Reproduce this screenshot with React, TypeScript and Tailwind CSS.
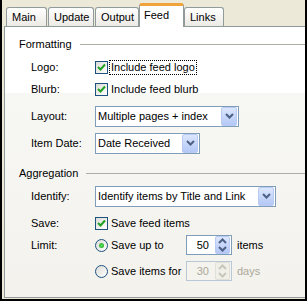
import React from "react";

const Check = () => (
  <span className="w-[13px] h-[13px] border border-[#1c5180] bg-[linear-gradient(135deg,#dcdcd7,#ffffff)] flex items-center justify-center shrink-0">
    <svg width="11" height="11" viewBox="0 0 11 11">
      <polyline points="2,5 4.5,7.5 9,2.5" fill="none" stroke="#21a121" strokeWidth="2" />
    </svg>
  </span>
);

const Radio = ({ on }: { on?: boolean }) => (
  <span className="w-[13px] h-[13px] rounded-full border border-[#1c5180] bg-[linear-gradient(135deg,#dcdcd7,#ffffff)] flex items-center justify-center shrink-0">
    {on && <span className="w-[5px] h-[5px] rounded-full bg-[radial-gradient(circle,#5ee35e,#1e9f1e)]" />}
  </span>
);

const Chevron = ({ color = "#4d6185" }: { color?: string }) => (
  <svg width="9" height="6" viewBox="0 0 9 6">
    <polyline points="1,1 4.5,4.5 8,1" fill="none" stroke={color} strokeWidth="2" />
  </svg>
);

const Select = ({ value, w }: { value: string; w: string }) => (
  <div className={`${w} h-[21px] border border-[#7f9db9] bg-white flex items-center pl-[2px] pr-[1px]`}>
    <span className="flex-1 whitespace-nowrap">{value}</span>
    <span className="w-[16px] h-[19px] rounded-[2px] border border-[#b9cbf3] bg-[linear-gradient(to_bottom,#dce6fd,#b4c8f6)] flex items-center justify-center">
      <Chevron />
    </span>
  </div>
);

const Spin = ({ value, disabled }: { value: string; disabled?: boolean }) => (
  <div
    className={`w-[46px] h-[20px] border flex items-center pr-[1px] ${
      disabled ? "border-[#b8c8d8] bg-[#f4f3ee] text-[#aca899]" : "border-[#7f9db9] bg-white text-black"
    }`}
  >
    <span className="flex-1 text-right pr-[6px]">{value}</span>
    <span
      className={`w-[15px] h-[18px] flex flex-col rounded-[2px] border ${
        disabled ? "border-[#e0dfd8] bg-[#f0efe8]" : "border-[#b9cbf3] bg-[linear-gradient(to_bottom,#dce6fd,#b4c8f6)]"
      }`}
    >
      <span className="flex-1 flex items-center justify-center rotate-180">
        <Chevron color={disabled ? "#c9c7ba" : "#4d6185"} />
      </span>
      <span className="flex-1 flex items-center justify-center">
        <Chevron color={disabled ? "#c9c7ba" : "#4d6185"} />
      </span>
    </span>
  </div>
);

const Group = ({ title, className }: { title: string; className: string }) => (
  <div className={`flex items-center h-[14px] ${className}`}>
    <span>{title}</span>
    <div className="flex-1 h-px bg-[#aeada3] ml-[8px]" />
  </div>
);

const Row = ({ label, children, className = "" }: { label: string; children: React.ReactNode; className?: string }) => (
  <div className={`flex items-center h-[22px] pl-[12px] ${className}`}>
    <div className="w-[64px] shrink-0">{label}</div>
    {children}
  </div>
);

const Tab = ({ label, w, className = "" }: { label: string; w: string; className?: string }) => (
  <div
    className={`${w} h-[19px] border border-b-0 border-[#919b9c] rounded-t-[3px] bg-[linear-gradient(to_bottom,#ffffff,#eceae4)] flex items-center pl-[5px] ${className}`}
  >
    {label}
  </div>
);

export default function App() {
  return (
    <div className="w-[307px] h-[301px] bg-[#ece9d8] border-l-2 border-r-2 border-b-2 border-black flex flex-col font-['Liberation_Sans',Arial,sans-serif] text-[11px] text-black leading-none">
      <div className="flex items-end h-[26px] pl-[4px] shrink-0">
        <Tab label="Main" w="w-[41px]" />
        <Tab label="Update" w="w-[46px]" className="ml-[1px]" />
        <Tab label="Output" w="w-[44px]" className="ml-[1px]" />
        <div className="w-[45px] h-[24px] -mb-px relative z-10 border border-b-0 border-[#919b9c] border-t-[3px] border-t-[#f0a33a] rounded-t-[3px] bg-white flex items-center pl-[4px] pb-[2px]">
          Feed
        </div>
        <Tab label="Links" w="w-[40px]" />
      </div>
      <div className="h-[272px] ml-[2px] border border-r-0 border-[#919b9c] bg-[linear-gradient(to_bottom,#ffffff_66px,#f7f7f4_66px,#f3f2ed)] pl-[14px] flex flex-col">
        <Group title="Formatting" className="mt-[10px]" />
        <Row label="Logo:" className="mt-[5px]">
          <Check />
          <span className="ml-px border border-dotted border-black px-[1px] py-[1px]">Include feed logo</span>
        </Row>
        <Row label="Blurb:">
          <Check />
          <span className="ml-[3px]">Include feed blurb</span>
        </Row>
        <Row label="Layout:" className="mt-[5px]">
          <Select value="Multiple pages + index" w="w-[144px]" />
        </Row>
        <Row label="Item Date:" className="mt-[5px]">
          <Select value="Date Received" w="w-[105px]" />
        </Row>
        <Group title="Aggregation" className="mt-[12px]" />
        <Row label="Identify:" className="mt-[5px]">
          <Select value="Identify items by Title and Link" w="w-[181px]" />
        </Row>
        <Row label="Save:" className="mt-[5px]">
          <Check />
          <span className="ml-[3px]">Save feed items</span>
        </Row>
        <Row label="Limit:">
          <Radio on />
          <span className="ml-[3px] w-[75px]">Save up to</span>
          <Spin value="50" />
          <span className="ml-[5px]">items</span>
        </Row>
        <Row label="" className="mt-[4px]">
          <Radio />
          <span className="ml-[3px] w-[75px]">Save items for</span>
          <Spin value="30" disabled />
          <span className="ml-[5px] text-[#aca899]">days</span>
        </Row>
      </div>
    </div>
  );
}
